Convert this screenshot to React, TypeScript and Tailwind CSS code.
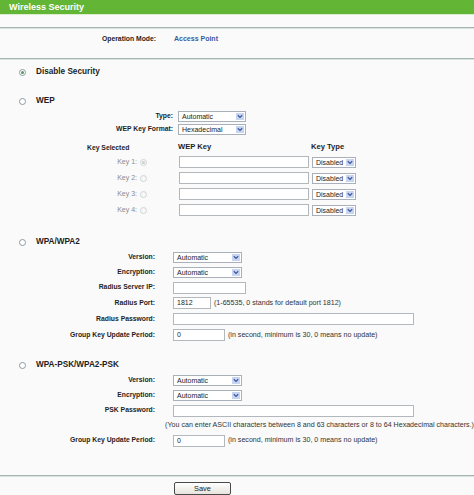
import React from 'react';

const Chevron = () => (
    <svg width="6" height="5" viewBox="0 0 6 5" className="block">
        <path d="M0.8 1.2 L3 3.4 L5.2 1.2" fill="none" stroke="#3f5a9a" strokeWidth="1.3" />
    </svg>
);

const Select = ({ value, w }: { value: string; w: string }) => (
    <div className={`${w} h-[11px] border border-[#a9b0ba] bg-white flex items-stretch`}>
        <span className="flex-1 pl-[3px] text-[7px] leading-[9px] text-[#222] whitespace-nowrap overflow-hidden">{value}</span>
        <span className="w-[8px] m-px bg-[#c7d5f2] flex items-center justify-center">
            <Chevron />
        </span>
    </div>
);

const Input = ({ w, value }: { w: string; value?: string }) => (
    <div className={`${w} h-[12px] border border-[#b3b8bd] bg-white pl-[3px] text-[7px] leading-[10px] text-[#222]`}>
        {value}
    </div>
);

const Radio = ({ checked, disabled }: { checked?: boolean; disabled?: boolean }) => (
    <span
        className={`w-[7px] h-[7px] rounded-full border flex items-center justify-center shrink-0 ${
            disabled ? 'border-[#d0d4d6] bg-[#f8f8f8]' : 'border-[#8a9ba3] bg-white'
        }`}
    >
        {checked && <span className={`w-[3px] h-[3px] rounded-full ${disabled ? 'bg-[#c9cdd0]' : 'bg-[#4f9a5a]'}`} />}
    </span>
);

const Separator = () => <div className="h-[2px] bg-[#a3b7b0] border-b border-[#d8e2de]" />;

// label column width and gap used by the WPA sections
const Field = ({ label, h = 'h-[15px]', children }: { label: string; h?: string; children: React.ReactNode }) => (
    <div className={`${h} flex items-center`}>
        <div className="w-[156px] pr-px text-right text-[6.8px] font-bold text-[#1e1e1e] whitespace-nowrap">{label}</div>
        <div className="ml-[17px] flex items-center gap-[3px]">{children}</div>
    </div>
);

const Note = ({ children }: { children: React.ReactNode }) => (
    <span className="text-[7.1px] text-[#333] whitespace-nowrap">{children}</span>
);

const Heading = ({ label, checked }: { label: string; checked?: boolean }) => (
    <div className="h-[16px] flex items-center pl-[19px]">
        <Radio checked={checked} />
        <span className="ml-[10px] text-[8.2px] font-bold text-[#1e1e1e]">{label}</span>
    </div>
);

export default function App() {
    const keys = ['Key 1:', 'Key 2:', 'Key 3:', 'Key 4:'];
    return (
        <div className="w-[474px] h-[495px] overflow-hidden bg-[#fafafa]" style={{ fontFamily: '"Liberation Sans", Arial, sans-serif' }}>
            <div className="h-[14px] bg-[#63b535] pl-[9px] text-[9px] leading-[14px] font-bold text-white">Wireless Security</div>
            <div className="h-px bg-[#d9eecb]" />
            <div className="h-[12px]" />
            <Separator />

            {/* operation mode */}
            <div className="h-[29px] pt-[5px]">
                <div className="h-[10px] flex items-center">
                    <div className="w-[156px] text-right text-[6.8px] font-bold text-[#1e1e1e]">Operation Mode:</div>
                    <div className="ml-[18px] text-[7px] font-bold text-[#3a5b9d]">Access Point</div>
                </div>
            </div>
            <Separator />

            <div className="h-[4px]" />
            <Heading label="Disable Security" checked />

            {/* WEP */}
            <div className="h-[13px]" />
            <Heading label="WEP" />
            <div className="h-[14px] flex items-center">
                <div className="w-[173px] text-right text-[6.8px] font-bold text-[#1e1e1e]">Type:</div>
                <div className="ml-[5px]"><Select value="Automatic" w="w-[68px]" /></div>
            </div>
            <div className="h-[12px] flex items-center">
                <div className="w-[173px] text-right text-[6.8px] font-bold text-[#1e1e1e]">WEP Key Format:</div>
                <div className="ml-[5px]"><Select value="Hexadecimal" w="w-[68px]" /></div>
            </div>
            <div className="h-[5px]" />
            <div className="h-[14px] flex items-center">
                <div className="w-[178px] pl-[87px] pt-[2px] text-[6.8px] font-bold text-[#1e1e1e]">Key Selected</div>
                <div className="w-[133px] text-[7.6px] font-bold text-[#1e1e1e]">WEP Key</div>
                <div className="text-[7.6px] font-bold text-[#1e1e1e]">Key Type</div>
            </div>
            {keys.map((k, i) => (
                <div key={k} className="h-[16px] flex items-center">
                    <div className="w-[137px] text-right text-[7px] text-[#8a8a8a]">{k}</div>
                    <div className="ml-[3px] w-[39px]"><Radio checked={i === 0} disabled /></div>
                    <Input w="w-[130px]" />
                    <div className="ml-[3px]"><Select value="Disabled" w="w-[44px]" /></div>
                </div>
            ))}

            {/* WPA/WPA2 */}
            <div className="h-[16px]" />
            <Heading label="WPA/WPA2" />
            <Field label="Version:"><Select value="Automatic" w="w-[69px]" /></Field>
            <Field label="Encryption:"><Select value="Automatic" w="w-[69px]" /></Field>
            <Field label="Radius Server IP:"><Input w="w-[73px]" /></Field>
            <Field label="Radius Port:" h="h-[16px]">
                <Input w="w-[38px]" value="1812" />
                <Note>(1-65535, 0 stands for default port 1812)</Note>
            </Field>
            <Field label="Radius Password:" h="h-[16px]"><Input w="w-[241px]" /></Field>
            <Field label="Group Key Update Period:" h="h-[16px]">
                <Input w="w-[52px]" value="0" />
                <Note>(in second, minimum is 30, 0 means no update)</Note>
            </Field>

            {/* WPA-PSK/WPA2-PSK */}
            <div className="h-[14px]" />
            <Heading label="WPA-PSK/WPA2-PSK" />
            <Field label="Version:"><Select value="Automatic" w="w-[69px]" /></Field>
            <Field label="Encryption:"><Select value="Automatic" w="w-[69px]" /></Field>
            <Field label="PSK Password:"><Input w="w-[241px]" /></Field>
            <Field label="">
                <Note>(You can enter ASCII characters between 8 and 63 characters or 8 to 64 Hexadecimal characters.)</Note>
            </Field>
            <Field label="Group Key Update Period:">
                <Input w="w-[52px]" value="0" />
                <Note>(in second, minimum is 30, 0 means no update)</Note>
            </Field>

            <div className="h-[27px]" />
            <Separator />
            <div className="h-[5px]" />
            <div className="flex pl-[174px]">
                <button className="w-[57px] h-[13px] border border-[#4a4a4a] rounded-[2px] bg-gradient-to-b from-white to-[#e6e4dc] text-[7.4px] leading-[11px] text-[#222]">
                    Save
                </button>
            </div>
        </div>
    );
}
